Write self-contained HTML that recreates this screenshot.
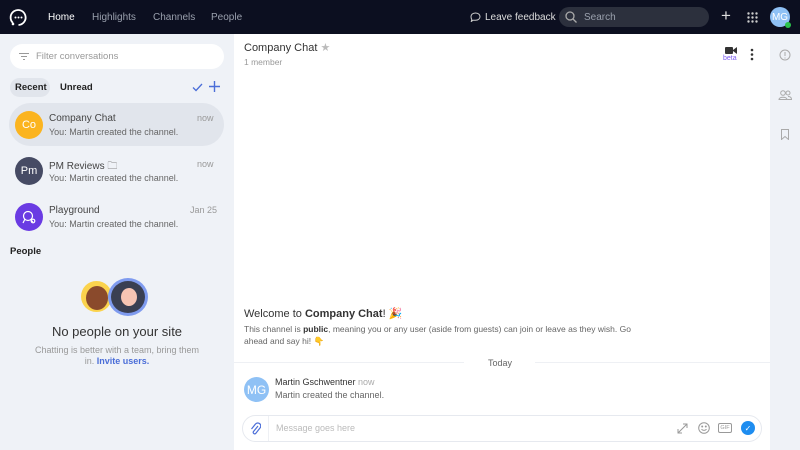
<!DOCTYPE html>
<html><head><style>
*{box-sizing:border-box;margin:0;padding:0}
body{width:800px;height:450px;overflow:hidden;font-family:"Liberation Sans",sans-serif;background:#fff;position:relative;color:#333}
.abs{position:absolute}
.hdr{left:0;top:0;width:800px;height:34px;background:#0c0f20}
.nav{top:12px;font-size:10px;color:#9aa0ad}
.side{left:0;top:34px;width:234px;height:416px;background:#eff2f7}
.rail{left:770px;top:34px;width:30px;height:416px;background:#eff2f7}
.av{border-radius:50%;color:#fff;font-size:11px;display:flex;align-items:center;justify-content:center}
.t1{font-size:10px;color:#444}
.t2{font-size:9px;color:#666}
.tm{font-size:9px;color:#999}
</style></head><body>
<div class="abs hdr"></div>
<svg class="abs" style="left:9px;top:8px" width="19" height="19" viewBox="0 0 19 19"><path d="M4 15A7.5 7.5 0 1 1 9.5 17" fill="none" stroke="#fff" stroke-width="1.8"/><circle cx="4" cy="16" r="1.3" fill="#fff"/><circle cx="6.5" cy="9.5" r="1" fill="#fff"/><circle cx="9.5" cy="9.5" r="1" fill="#fff"/><circle cx="12.5" cy="9.5" r="1" fill="#fff"/></svg>
<div class="abs nav" style="left:48px;color:#fff">Home</div>
<div class="abs nav" style="left:92px">Highlights</div>
<div class="abs nav" style="left:153px">Channels</div>
<div class="abs nav" style="left:211px">People</div>
<svg class="abs" style="left:470px;top:12px" width="11" height="10"><path d="M5.5 1C8.5 1 10 2.8 10 4.6S8.5 8.2 5.5 8.2H3L1.3 9.5 1.8 7.4C1.2 6.6 1 5.8 1 4.6 1 2.8 2.5 1 5.5 1Z" fill="none" stroke="#ccc" stroke-width="1"/></svg>
<div class="abs nav" style="left:485px;color:#ddd">Leave feedback</div>
<div class="abs" style="left:559px;top:7px;width:150px;height:20px;border-radius:10px;background:#2c303d"></div>
<svg class="abs" style="left:565px;top:11px" width="12" height="12"><circle cx="5" cy="5" r="4" fill="none" stroke="#aaa" stroke-width="1.3"/><path d="M8 8l3.5 3.5" stroke="#aaa" stroke-width="1.3"/></svg>
<div class="abs nav" style="left:584px;color:#9aa0ad">Search</div>
<div class="abs" style="left:721px;top:6px;color:#ddd;font-size:17px;line-height:20px">+</div>
<svg class="abs" style="left:747px;top:12px" width="11" height="11" fill="#ccc"><circle cx="1.5" cy="1.5" r="1.2"/><circle cx="5.5" cy="1.5" r="1.2"/><circle cx="9.5" cy="1.5" r="1.2"/><circle cx="1.5" cy="5.5" r="1.2"/><circle cx="5.5" cy="5.5" r="1.2"/><circle cx="9.5" cy="5.5" r="1.2"/><circle cx="1.5" cy="9.5" r="1.2"/><circle cx="5.5" cy="9.5" r="1.2"/><circle cx="9.5" cy="9.5" r="1.2"/></svg>
<div class="abs av" style="left:770px;top:7px;width:20px;height:20px;background:#8fc1f5;font-size:10px">MG</div>
<div class="abs" style="left:785px;top:22px;width:6px;height:6px;border-radius:50%;background:#2bc24c"></div>

<div class="abs side"></div>
<div class="abs" style="left:10px;top:44px;width:214px;height:25px;border-radius:13px;background:#fff"></div>
<svg class="abs" style="left:19px;top:53px" width="10" height="7" stroke="#999" stroke-width="1"><path d="M0 .5h10M2 3.5h6M4 6.5h2"/></svg>
<div class="abs" style="left:36px;top:51px;font-size:9.5px;color:#999">Filter conversations</div>
<div class="abs" style="left:10px;top:78px;width:40px;height:19px;border-radius:10px;background:#e1e5ec"></div>
<div class="abs" style="left:15px;top:82px;font-size:9.5px;font-weight:bold;color:#222">Recent</div>
<div class="abs" style="left:60px;top:82px;font-size:9.5px;font-weight:bold;color:#222">Unread</div>
<svg class="abs" style="left:192px;top:83px" width="11" height="9"><path d="M1 4.5l3 3L10 1" fill="none" stroke="#4b6ed8" stroke-width="1.3"/></svg>
<svg class="abs" style="left:209px;top:81px" width="11" height="11"><path d="M5.5 0v11M0 5.5h11" stroke="#4b6ed8" stroke-width="1.4"/></svg>
<div class="abs" style="left:9px;top:103px;width:215px;height:43px;border-radius:22px;background:#e1e5ec"></div>
<div class="abs av" style="left:15px;top:111px;width:28px;height:28px;background:#fbb41f">Co</div>
<div class="abs t1" style="left:49px;top:113px">Company Chat</div><div class="abs tm" style="left:197px;top:113px">now</div>
<div class="abs t2" style="left:49px;top:127px">You: Martin created the channel.</div>
<div class="abs av" style="left:15px;top:157px;width:28px;height:28px;background:#464b64">Pm</div>
<div class="abs t1" style="left:49px;top:159px">PM Reviews <span style="color:#888">&#x1F5C0;</span></div><div class="abs tm" style="left:197px;top:159px">now</div>
<div class="abs t2" style="left:49px;top:173px">You: Martin created the channel.</div>
<div class="abs av" style="left:15px;top:203px;width:28px;height:28px;background:#6a3be3"><svg width="14" height="14" fill="none" stroke="#fff" stroke-width="1.2"><circle cx="6" cy="6" r="4.5"/><path d="M3 9L1 13M9 10l2 2"/><circle cx="11" cy="11" r="1.8"/></svg></div>
<div class="abs t1" style="left:49px;top:205px">Playground</div><div class="abs tm" style="left:190px;top:205px">Jan 25</div>
<div class="abs t2" style="left:49px;top:219px">You: Martin created the channel.</div>
<div class="abs" style="left:10px;top:246px;font-size:9.5px;font-weight:bold;color:#222">People</div>
<div class="abs" style="left:81px;top:281px;width:31px;height:31px;border-radius:50%;background:#fbd34d"></div>
<div class="abs" style="left:86px;top:286px;width:22px;height:24px;border-radius:50%;background:#8a4a2c"></div>
<div class="abs" style="left:108px;top:278px;width:40px;height:38px;border-radius:50%;background:#7f9bef"></div>
<div class="abs" style="left:111px;top:281px;width:34px;height:32px;border-radius:50%;background:#3a3f52"></div>
<div class="abs" style="left:121px;top:288px;width:16px;height:18px;border-radius:50%;background:#f7c4b3"></div>
<div class="abs" style="left:0;top:324px;width:234px;text-align:center;font-size:13px;color:#333">No people on your site</div>
<div class="abs" style="left:32px;top:345px;width:170px;text-align:center;font-size:9px;color:#999;line-height:11px">Chatting is better with a team, bring them in. <b style="color:#4b6ed8">Invite users.</b></div>

<div class="abs" style="left:244px;top:41px;font-size:11px;color:#333">Company Chat <span style="color:#bbb">★</span></div>
<div class="abs" style="left:244px;top:57px;font-size:8.5px;color:#999">1 member</div>
<svg class="abs" style="left:725px;top:46px" width="12" height="9" fill="#333"><rect x="0" y="1" width="8" height="7" rx="1"/><path d="M8 4l4-3v7L8 5z"/></svg>
<div class="abs" style="left:723px;top:55px;font-size:7px;color:#7c5cf0">beta</div>
<svg class="abs" style="left:750px;top:48px" width="4" height="13" fill="#333"><circle cx="2" cy="2" r="1.3"/><circle cx="2" cy="6.5" r="1.3"/><circle cx="2" cy="11" r="1.3"/></svg>
<div class="abs rail"></div>
<svg class="abs" style="left:779px;top:49px" width="12" height="12" fill="none" stroke="#aaa"><circle cx="6" cy="6" r="5"/><path d="M6 3v4M6 8.5v1"/></svg>
<svg class="abs" style="left:778px;top:90px" width="14" height="10" fill="none" stroke="#aaa"><circle cx="5" cy="3" r="2.3"/><circle cx="10" cy="3" r="2"/><path d="M1 9.5c0-3 8-3 8 0zM10 6.5c2 0 3.5.8 3.5 3h-4"/></svg>
<svg class="abs" style="left:781px;top:129px" width="8" height="11" fill="none" stroke="#aaa"><path d="M.5.5h7v10L4 7.5.5 10.5z"/></svg>

<div class="abs" style="left:244px;top:307px;font-size:11px;color:#333">Welcome to <b>Company Chat</b>! 🎉</div>
<div class="abs" style="left:244px;top:323px;width:400px;font-size:8.5px;color:#666;line-height:12px">This channel is <b style="color:#333">public</b>, meaning you or any user (aside from guests) can join or leave as they wish. Go ahead and say hi! 👇</div>
<div class="abs" style="left:234px;top:362px;width:230px;height:1px;background:#eef0f4"></div>
<div class="abs" style="left:535px;top:362px;width:235px;height:1px;background:#eef0f4"></div>
<div class="abs" style="left:488px;top:358px;font-size:9px;color:#666">Today</div>
<div class="abs av" style="left:244px;top:377px;width:25px;height:25px;background:#8fc1f5;font-size:12px">MG</div>
<div class="abs" style="left:275px;top:377px;font-size:9px;color:#333">Martin Gschwentner <span style="color:#aaa">now</span></div>
<div class="abs t2" style="left:275px;top:390px">Martin created the channel.</div>
<div class="abs" style="left:242px;top:415px;width:520px;height:27px;border-radius:14px;border:1px solid #e6e9ef;background:#fff"></div>
<div class="abs" style="left:268px;top:416px;width:1px;height:25px;background:#eef0f4"></div>
<svg class="abs" style="left:250px;top:422px" width="11" height="13" fill="none" stroke="#4b6ed8" stroke-width="1.2"><path d="M8 4L3.5 9.5a1.5 1.5 0 0 0 2.2 2L10 6a3 3 0 0 0-4.5-4L1.5 7"/></svg>
<div class="abs" style="left:276px;top:423px;font-size:9px;color:#bbb">Message goes here</div>
<svg class="abs" style="left:677px;top:423px" width="11" height="11" stroke="#999" fill="none"><path d="M1 10L10 1M6 1h4v4M1 6v4h4"/></svg>
<svg class="abs" style="left:698px;top:422px" width="12" height="12" fill="none" stroke="#999"><circle cx="6" cy="6" r="5.3"/><path d="M3.5 7.2c1.3 1.6 3.7 1.6 5 0"/><circle cx="4.2" cy="4.5" r=".5"/><circle cx="7.8" cy="4.5" r=".5"/></svg>
<div class="abs" style="left:718px;top:423px;width:14px;height:10px;border:1px solid #999;border-radius:2px;font-size:5.5px;color:#999;text-align:center;line-height:8px">GIF</div>
<div class="abs av" style="left:741px;top:421px;width:14px;height:14px;background:#1e8df0;font-size:8px">✓</div>
</body></html>
